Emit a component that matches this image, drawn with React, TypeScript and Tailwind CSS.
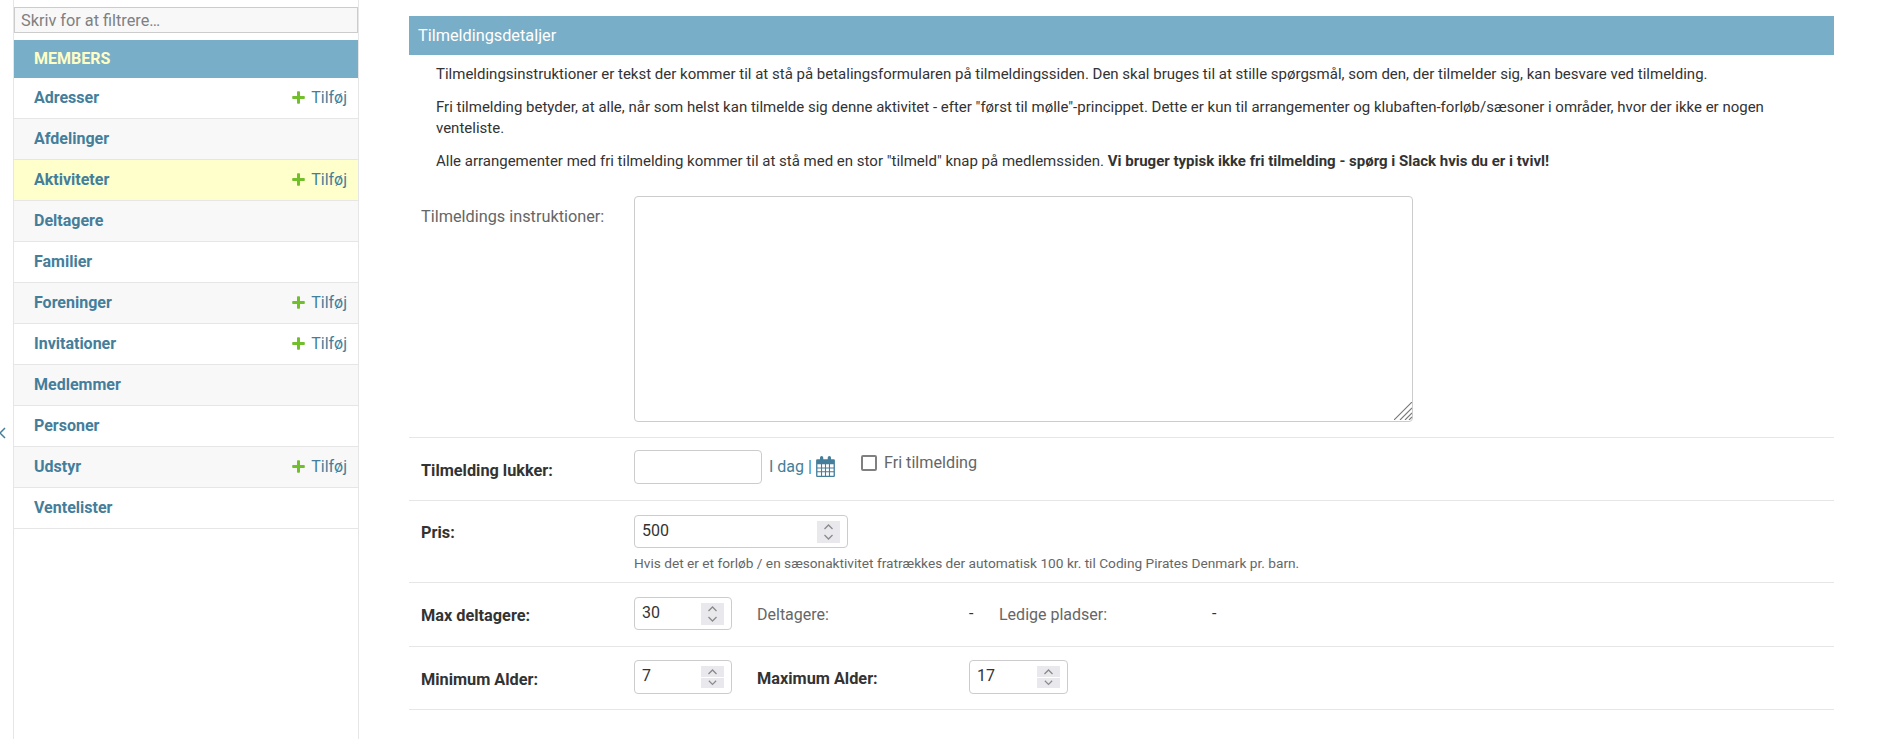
const models = [
  { name: 'Adresser', add: true },
  { name: 'Afdelinger', add: false },
  { name: 'Aktiviteter', add: true, current: true },
  { name: 'Deltagere', add: false },
  { name: 'Familier', add: false },
  { name: 'Foreninger', add: true },
  { name: 'Invitationer', add: true },
  { name: 'Medlemmer', add: false },
  { name: 'Personer', add: false },
  { name: 'Udstyr', add: true },
  { name: 'Ventelister', add: false },
];

function Sidebar() {
  return (
    <aside className="relative ml-[13px] w-[346px] shrink-0 border-x border-[#e6e6e6] pt-[7px]">
      {/* collapse toggle */}
      <svg
        className="absolute left-[-15px] top-[427px] text-[#447e9b]"
        width="8"
        height="12"
        viewBox="0 0 8 12"
        fill="none"
        stroke="currentColor"
        strokeWidth="1.5"
      >
        <path d="M6 1 1 6l5 5" />
      </svg>

      <input
        readOnly
        placeholder="Skriv for at filtrere…"
        className="block h-[26px] w-full border border-[#cccccc] bg-[#f8f8f8] px-[6px] text-[16.3px] text-[#333] outline-none placeholder:text-[#808080]"
      />

      <div className="mt-[7px] flex h-[38px] items-center pl-[20px] bg-[#79aec8] text-[16px] font-bold text-[#ffffc4]">
        MEMBERS
      </div>

      {models.map((m, i) => (
        <div
          key={m.name}
          className={`flex h-[41px] items-center justify-between border-b border-[#e6e6e6] pb-[1px] pl-[20px] pr-[11px] text-[16px] ${
            m.current ? 'bg-[#ffffcc]' : i % 2 === 0 ? 'bg-white' : 'bg-[#f8f8f8]'
          }`}
        >
          <a className="font-bold text-[#447e9b]">{m.name}</a>
          {m.add && (
            <a className="flex items-center text-[#447e9b]">
              <svg className="mr-[6px]" width="13" height="13" viewBox="0 0 13 13" fill="#70bf2b">
                <path d="M5 1a.8.8 0 0 1 .8-.8h1.4A.8.8 0 0 1 8 1v4h4a.8.8 0 0 1 .8.8v1.4a.8.8 0 0 1-.8.8H8v4a.8.8 0 0 1-.8.8H5.8A.8.8 0 0 1 5 12V8H1a.8.8 0 0 1-.8-.8V5.800A.8.8 0 0 1 1 5h4V1Z" />
              </svg>
              Tilføj
            </a>
          )}
        </div>
      ))}
    </aside>
  );
}

function Spinner({ split }: { split?: boolean }) {
  return (
    <div className="flex h-[22px] w-[23px] flex-col bg-[#e9e9ed]">
      {[0, 1].map((n) => (
        <svg
          key={n}
          className={split && n === 1 ? 'border-t border-white' : ''}
          width="23"
          height="11"
          viewBox="0 0 23 11"
          fill="none"
          stroke="#8a8a8a"
          strokeWidth="1.3"
        >
          <path d={n === 0 ? 'M7.500 8 11.500 4 15.500 8' : 'M7.500 3 11.500 7 15.500 3'} />
        </svg>
      ))}
    </div>
  );
}

function NumberInput({ value, width, tall, split }: { value: string; width: string; tall?: boolean; split?: boolean }) {
  return (
    <div
      className={`flex items-center justify-between rounded-[4px] border border-[#cccccc] pl-[7px] pr-[7px] text-[16px] text-[#333] ${width} ${
        tall ? 'h-[34px]' : 'h-[33px]'
      }`}
    >
      <span className="-mt-[2px]">{value}</span>
      <Spinner split={split} />
    </div>
  );
}

function Row({
  label,
  labelTop,
  children,
  className,
}: {
  label: string;
  labelTop: string;
  children: React.ReactNode;
  className: string;
}) {
  return (
    <div className={`flex border-b border-[#e6e6e6] pl-[12px] ${className}`}>
      <label className={`w-[213px] shrink-0 text-[16.3px] font-bold leading-[20px] text-[#333] ${labelTop}`}>{label}</label>
      {children}
    </div>
  );
}

function Details() {
  return (
    <main className="ml-[50px] w-[1425px] pt-[16px] text-[15px] text-[#333]">
      <h2 className="flex h-[39px] items-center bg-[#79aec8] pl-[9px] pt-[1px] text-[16.3px] text-white">Tilmeldingsdetaljer</h2>

      <div className="pl-[27px] pr-[50px] pt-[9px] leading-[21px]">
        <p>
          Tilmeldingsinstruktioner er tekst der kommer til at stå på betalingsformularen på tilmeldingssiden. Den skal
          bruges til at stille spørgsmål, som den, der tilmelder sig, kan besvare ved tilmelding.
        </p>
        <p className="mt-[12px]">
          Fri tilmelding betyder, at alle, når som helst kan tilmelde sig denne aktivitet - efter "først til mølle"-princippet.
          Dette er kun til arrangementer og klubaften-forløb/sæsoner i områder, hvor der ikke er nogen venteliste.
        </p>
        <p className="mt-[12px]">
          Alle arrangementer med fri tilmelding kommer til at stå med en stor "tilmeld" knap på medlemssiden.{' '}
          <b>Vi bruger typisk ikke fri tilmelding - spørg i Slack hvis du er i tvivl!</b>
        </p>
      </div>

      <div className="mt-[24px] flex h-[242px] border-b border-[#e6e6e6] pl-[12px]">
        <label className="w-[213px] shrink-0 pt-[11px] text-[16.3px] leading-[20px] text-[#666]">Tilmeldings instruktioner:</label>
        <div className="relative h-[226px] w-[779px]">
          <textarea readOnly className="block h-full w-full resize-none rounded-[4px] border border-[#cccccc] outline-none" />
          {/* resize grip */}
          <svg className="absolute bottom-[2px] right-[1px]" width="18" height="18" viewBox="0 0 18 18" stroke="#777" strokeWidth="1.100">
            <path d="M0 18 18 0M6 18 18 6M11 18l7-7M15 18l3-3" />
          </svg>
        </div>
      </div>

      <Row label="Tilmelding lukker:" labelTop="pt-[11px]" className="h-[63px] pt-[12px]">
        <div className="flex items-start">
          <input readOnly className="h-[34px] w-[128px] rounded-[4px] border border-[#cccccc] outline-none" />
          <span className="ml-[7px] mt-[6px] flex items-center text-[16px] leading-[20px] text-[#447e9b]">
            I dag
            <span className="ml-[4px]">|</span>
            <svg className="ml-[4px]" width="19" height="21" viewBox="0 0 17 19" fill="currentColor">
              <path
                fillRule="evenodd"
                d="M1 3h2.500V1.500a1.500 1.500 0 0 1 3 0V3h4V1.500a1.500 1.500 0 0 1 3 0V3H16a1 1 0 0 1 1 1v14a1 1 0 0 1-1 1H1a1 1 0 0 1-1-1V4a1 1 0 0 1 1-1ZM1.200 7.500v2.800h3.200V7.500H1.200Zm4.200 0v2.800h2.600V7.500H5.400Zm3.600 0v2.800h2.600V7.500H9Zm3.600 0v2.800h3.200V7.500h-3.200ZM1.200 11.300v2.500h3.200v-2.500H1.200Zm4.200 0v2.500h2.600v-2.500H5.400Zm3.600 0v2.500h2.600v-2.500H9Zm3.600 0v2.500h3.200v-2.500h-3.200ZM1.200 14.800v3h3.200v-3H1.200Zm4.200 0v3h2.600v-3H5.400Zm3.600 0v3h2.600v-3H9Zm3.600 0v3h3.200v-3h-3.200Z"
              />
            </svg>
          </span>
          <span className="ml-[26px] mt-[3px] flex items-center text-[16.2px] leading-[20px] text-[#666]">
            <span className="mr-[7px] -mt-[1px] h-[16px] w-[16px] rounded-[2px] border-2 border-[#808080]" />
            Fri tilmelding
          </span>
        </div>
      </Row>

      <Row label="Pris:" labelTop="pt-[8px]" className="h-[82px] pt-[14px]">
        <div>
          <NumberInput value="500" width="w-[214px]" />
          <p className="mt-[7px] text-[13.7px] leading-[16px] text-[#666]">
            Hvis det er et forløb / en sæsonaktivitet fratrækkes der automatisk 100 kr. til Coding Pirates Denmark pr. barn.
          </p>
        </div>
      </Row>

      <Row label="Max deltagere:" labelTop="pt-[9px]" className="h-[64px] pt-[14px]">
        <div className="flex items-start text-[16px] leading-[20px] text-[#666]">
          <NumberInput value="30" width="w-[98px]" />
          <span className="ml-[25px] mt-[8px] w-[212px]">Deltagere:</span>
          <span className="mt-[7px] w-[30px] text-[#333]">-</span>
          <span className="mt-[8px] w-[213px]">Ledige pladser:</span>
          <span className="mt-[7px] text-[#333]">-</span>
        </div>
      </Row>

      <Row label="Minimum Alder:" labelTop="pt-[10px]" className="h-[63px] pt-[13px]">
        <div className="flex items-start">
          <NumberInput value="7" width="w-[98px]" tall split />
          <span className="ml-[25px] mt-[9px] w-[212px] text-[16.3px] font-bold leading-[20px]">Maximum Alder:</span>
          <NumberInput value="17" width="w-[99px]" tall split />
        </div>
      </Row>
    </main>
  );
}

export default function App() {
  return (
    <div className="flex h-[739px] overflow-hidden bg-white font-['Roboto',sans-serif]">
      <Sidebar />
      <Details />
    </div>
  );
}
